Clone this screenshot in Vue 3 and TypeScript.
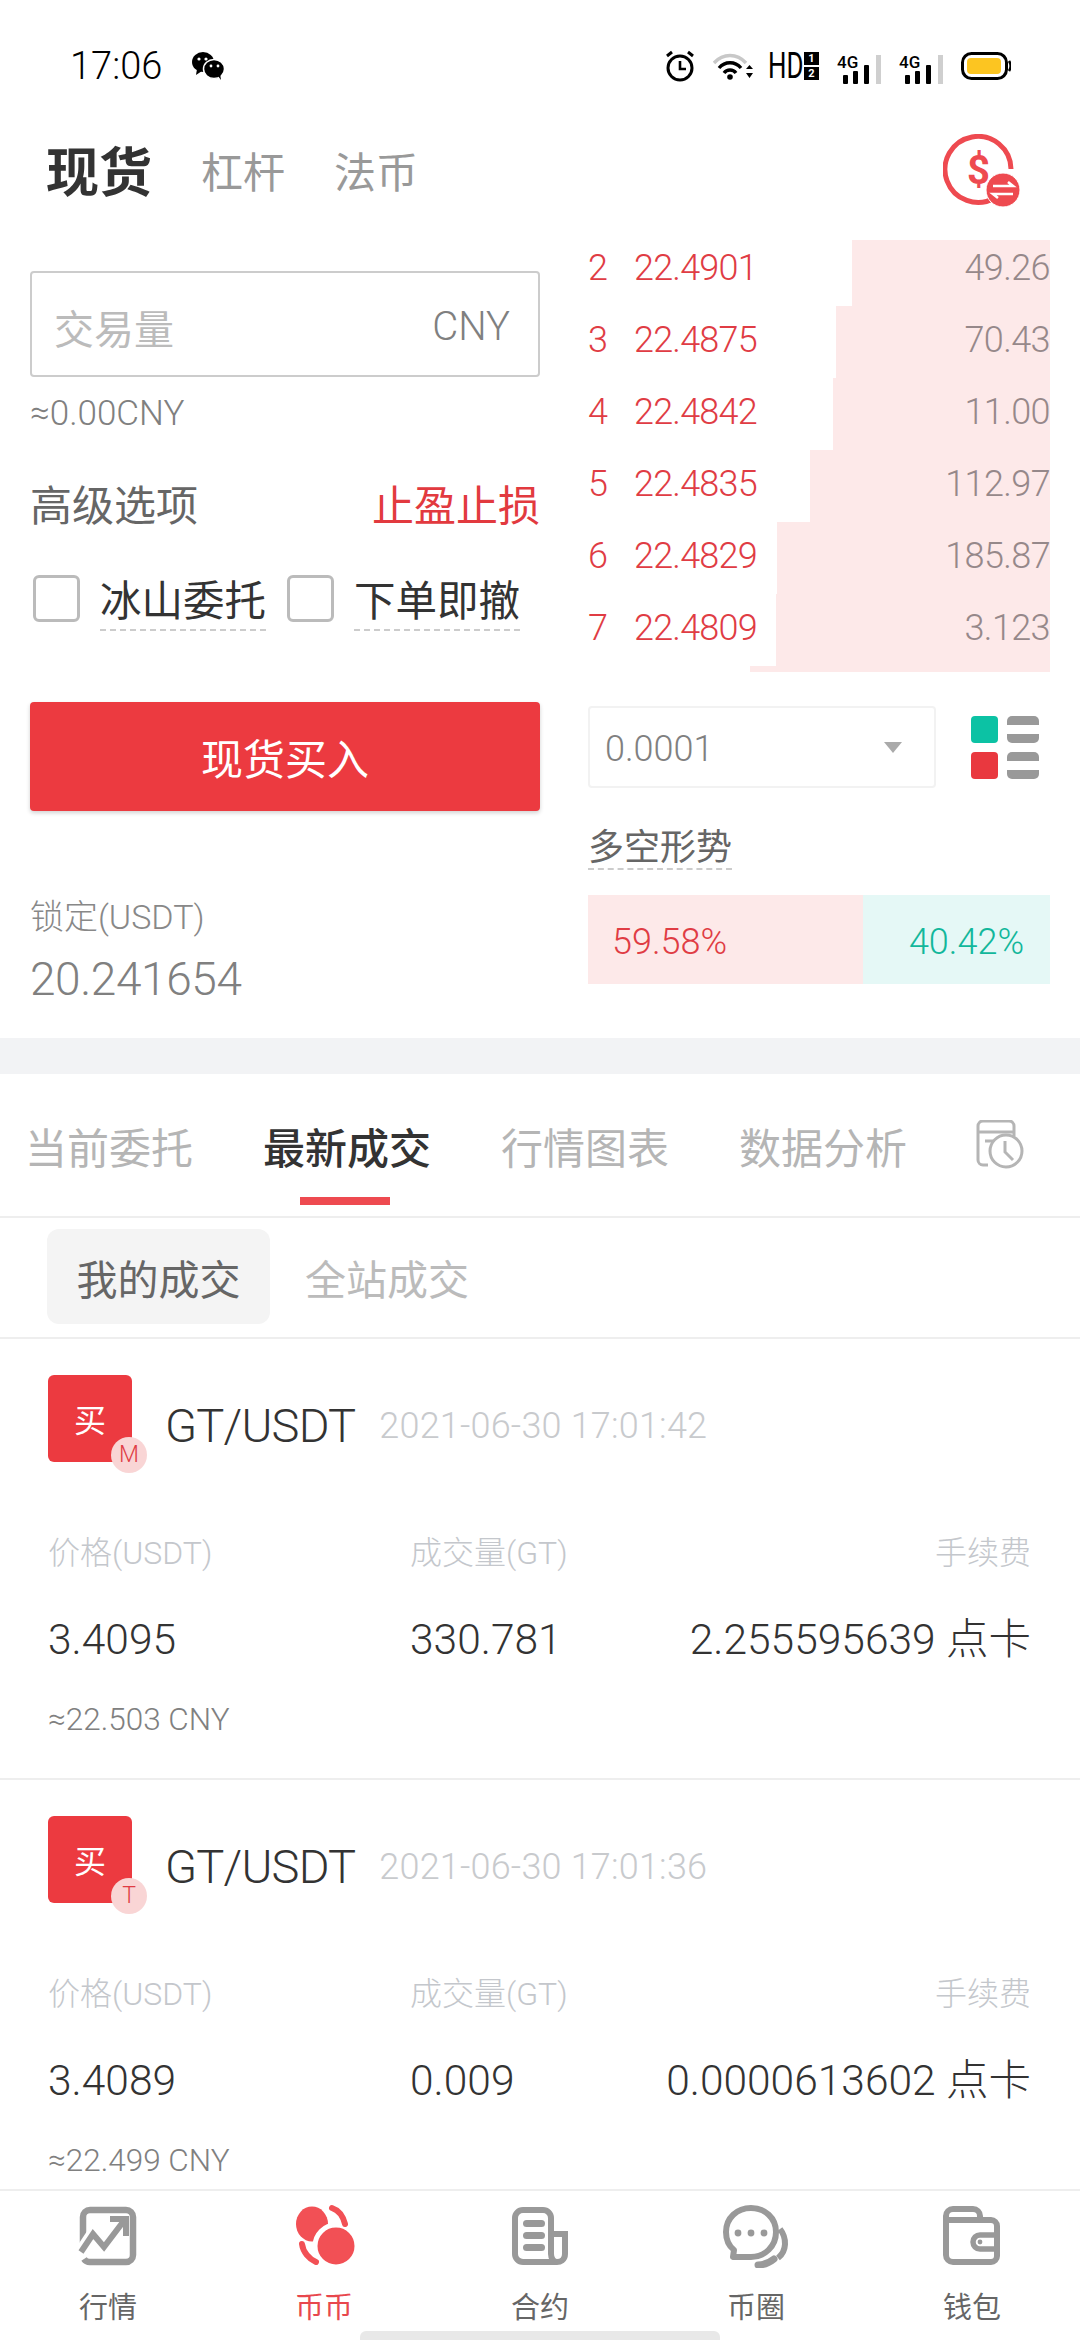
<template>
  <div class="page">
    <!-- Status bar -->
    <div class="status-bar">
      <span class="clock">17:06</span>
      <svg class="wechat" width="34" height="30" viewBox="0 0 34 30">
        <ellipse cx="12" cy="11" rx="11" ry="10" fill="#000" />
        <path d="M6 18l-1 6 6-4z" fill="#000" />
        <ellipse cx="23" cy="18" rx="10.5" ry="9.5" fill="#000" stroke="#fff" stroke-width="1.5" />
        <path d="M27 25l3 4-1-7z" fill="#000" />
        <circle cx="8" cy="8" r="1.6" fill="#fff" /><circle cx="15" cy="8" r="1.6" fill="#fff" />
        <circle cx="20" cy="15" r="1.4" fill="#fff" /><circle cx="27" cy="15" r="1.4" fill="#fff" />
      </svg>
      <div class="status-right">
        <svg width="30" height="32" viewBox="0 0 30 32">
          <circle cx="15" cy="18" r="12" fill="none" stroke="#000" stroke-width="3" />
          <path d="M15 11v8h6" fill="none" stroke="#000" stroke-width="2.6" />
          <path d="M2 6l5-4M28 6l-5-4" stroke="#000" stroke-width="3" />
        </svg>
        <svg class="wifi" width="40" height="28" viewBox="0 0 40 28">
          <path d="M1 11C10 1 24 1 33 11" fill="none" stroke="#c8c8c8" stroke-width="3.4" />
          <path d="M6 16C12 9 22 9 28 16" fill="none" stroke="#000" stroke-width="3.4" />
          <path d="M11 21c3-4 9-4 12 0" fill="none" stroke="#000" stroke-width="3.4" />
          <circle cx="17" cy="25" r="2.8" fill="#000" />
          <path d="M33 17l3.5-4 3.5 4zM33 21l3.5 5 3.5-5z" fill="#000" />
        </svg>
        <div class="hd">
          <span>HD</span>
          <i><b>1</b><b>2</b></i>
        </div>
        <svg v-for="n in 2" :key="n" class="signal" width="44" height="36" viewBox="0 -6 44 36">
          <text x="0" y="14" class="signal-text">4G</text>
          <rect x="6" y="21" width="5" height="9" rx="1" fill="#000" />
          <rect x="16" y="17" width="5" height="13" rx="1" fill="#000" />
          <rect x="27" y="11" width="5" height="19" rx="1" fill="#000" />
          <rect x="39" y="1" width="5" height="29" fill="#cfcfcf" />
        </svg>
        <svg class="battery" width="50" height="28" viewBox="0 0 50 28">
          <rect x="1.5" y="1.5" width="44" height="25" rx="9" fill="#fff" stroke="#000" stroke-width="3" />
          <rect x="6" y="6" width="34" height="16" rx="4" fill="#fcc521" />
          <path d="M48 9c2 3 2 7 0 10" fill="none" stroke="#000" stroke-width="2.5" />
        </svg>
      </div>
    </div>

    <!-- Market type header -->
    <div class="head">
      <span class="head-active">现货</span>
      <span class="head-tab">杠杆</span>
      <span class="head-tab">法币</span>
      <svg class="head-icon" width="78" height="74" viewBox="0 0 78 74">
        <path d="M51.5 64A33 33 0 1 1 68 35" fill="none" stroke="#ee4a50" stroke-width="5" />
        <text x="24" y="50" class="dollar">$</text>
        <circle cx="60" cy="56" r="17" fill="#ee4a50" stroke="#fff" stroke-width="1" />
        <path d="M50 52h20l-5-4M70 60H50l5 4" fill="none" stroke="#fff" stroke-width="2.6" />
      </svg>
    </div>

    <!-- Order form and depth -->
    <div class="trade">
      <div class="form">
        <div class="amount">
          <span class="amount-hint">交易量</span>
          <span class="amount-unit">CNY</span>
        </div>
        <div class="approx">≈0.00CNY</div>
        <div class="adv">
          <span class="adv-title">高级选项</span>
          <span class="adv-link">止盈止损</span>
        </div>
        <div class="checks">
          <span class="check-box"></span>
          <span class="check-label first">冰山委托</span>
          <span class="check-box"></span>
          <span class="check-label">下单即撤</span>
        </div>
        <div class="buy-btn">现货买入</div>
        <div class="lock-label">锁定(USDT)</div>
        <div class="lock-value">20.241654</div>
      </div>

      <div class="depth">
        <div class="depth-list">
          <div v-for="row in depthRows" :key="row.no" class="depth-row">
            <div class="depth-bar" :style="{ width: row.bar + 'px' }"></div>
            <span class="depth-no">{{ row.no }}</span>
            <span class="depth-price">{{ row.price }}</span>
            <span class="depth-qty">{{ row.qty }}</span>
          </div>
        </div>
        <div class="precision">
          <div class="precision-select">
            <span class="precision-value">0.0001</span>
            <i class="caret"></i>
          </div>
          <div class="layout-toggle">
            <i class="sq green"></i><i class="lines"></i>
            <i class="sq red"></i><i class="lines"></i>
          </div>
        </div>
        <div class="trend-title">多空形势</div>
        <div class="trend">
          <div class="trend-long">59.58%</div>
          <div class="trend-short">40.42%</div>
        </div>
      </div>
    </div>

    <div class="gap"></div>

    <!-- Scrolling lower part -->
    <div class="lower">
      <div class="tabs">
        <span v-for="t in tabs" :key="t" class="tab" :class="{ active: t === '最新成交' }">{{ t }}</span>
        <svg class="tab-icon" width="50" height="50" viewBox="0 0 50 50">
          <path d="M12 45H7a5 5 0 0 1-5-5V6a5 5 0 0 1 5-5h26a5 5 0 0 1 5 5v10" fill="none" stroke="#b5b5b5" stroke-width="3" />
          <path d="M2 12h36M9 21h14" fill="none" stroke="#b5b5b5" stroke-width="3" />
          <circle cx="30" cy="31" r="16" fill="#fff" stroke="#b5b5b5" stroke-width="3" />
          <path d="M29 21v11l8 8" fill="none" stroke="#b5b5b5" stroke-width="3" />
        </svg>
      </div>
      <div class="subtabs">
        <span class="subtab on">我的成交</span>
        <span class="subtab">全站成交</span>
      </div>

      <div v-for="trade in trades" :key="trade.time" class="card">
        <div class="card-head">
          <div class="side">
            买
            <span class="side-badge">{{ trade.role }}</span>
          </div>
          <span class="pair">GT/USDT</span>
          <span class="time">{{ trade.time }}</span>
        </div>
        <div class="cols labels">
          <span class="col-a">价格(USDT)</span>
          <span class="col-b">成交量(GT)</span>
          <span class="col-c">手续费</span>
        </div>
        <div class="cols values">
          <span class="col-a">{{ trade.price }}</span>
          <span class="col-b">{{ trade.amount }}</span>
          <span class="col-c">{{ trade.fee }} 点卡</span>
        </div>
        <div class="cny">{{ trade.cny }}</div>
      </div>
    </div>

    <!-- Bottom navigation -->
    <div class="nav">
      <div v-for="item in navItems" :key="item.key" class="nav-item" :class="{ current: item.key === 'spot' }">
        <svg class="nav-icon" width="72" height="64" viewBox="0 0 72 64">
          <template v-if="item.key === 'market'">
            <path d="M11 44V13a7 7 0 0 1 7-7h36a7 7 0 0 1 7 7v38a7 7 0 0 1-7 7H18a7 7 0 0 1-6-3" fill="none" stroke="#999" stroke-width="6.5" />
            <path d="M7 50l14-21 11 14 19-25" fill="none" stroke="#fff" stroke-width="12" />
            <path d="M9 48l12-18 11 13 19-25" fill="none" stroke="#999" stroke-width="6" />
            <path d="M38 15h16v17" fill="none" stroke="#999" stroke-width="6" />
          </template>
          <template v-else-if="item.key === 'spot'">
            <ellipse cx="24" cy="20" rx="16" ry="17.5" fill="#f25055" />
            <ellipse cx="48" cy="42" rx="21" ry="21" fill="#f25055" stroke="#fff" stroke-width="5" />
            <path d="M44 4c6 2 11 8 13 16" fill="none" stroke="#f25055" stroke-width="6" stroke-linecap="round" />
            <path d="M14 40c1 8 7 15 14 18" fill="none" stroke="#f25055" stroke-width="6" stroke-linecap="round" />
          </template>
          <template v-else-if="item.key === 'futures'">
            <path d="M53 58H19a8 8 0 0 1-8-8V14a8 8 0 0 1 8-8h20a8 8 0 0 1 8 8v36c0 5 3 8 6 8s8-2 8-8V30H48" fill="none" stroke="#999" stroke-width="6" />
            <rect x="19" y="16" width="22" height="7" rx="3.5" fill="#999" />
            <rect x="19" y="28" width="22" height="7" rx="3.5" fill="#999" />
            <rect x="19" y="40" width="22" height="7" rx="3.5" fill="#999" />
          </template>
          <template v-else-if="item.key === 'social'">
            <path d="M31 4C17 4 6 14 6 28c0 8 3 14 8 18l-1 7h18c14 0 25-11 25-25S45 4 31 4z" fill="none" stroke="#999" stroke-width="6" stroke-linejoin="round" />
            <circle cx="18" cy="29" r="3.4" fill="#999" />
            <circle cx="31" cy="29" r="3.4" fill="#999" />
            <circle cx="44" cy="29" r="3.4" fill="#999" />
            <path d="M60 25c7 9 7 22-2 29" fill="none" stroke="#999" stroke-width="6" />
            <path d="M38 61c6 0 11-2 16-6" fill="none" stroke="#999" stroke-width="7" stroke-linecap="round" />
          </template>
          <template v-else>
            <path d="M10 18v-6a7 7 0 0 1 7-7h20a7 7 0 0 1 7 7v5" fill="none" stroke="#999" stroke-width="6" />
            <path d="M10 16h45a6 6 0 0 1 6 6v30a6 6 0 0 1-6 6H17a7 7 0 0 1-7-7z" fill="none" stroke="#999" stroke-width="6" />
            <path d="M61 31H44a7 7 0 0 0 0 14h17" fill="none" stroke="#999" stroke-width="5.5" />
            <circle cx="44" cy="38" r="2.4" fill="#999" />
          </template>
        </svg>
        <span class="nav-label">{{ item.label }}</span>
      </div>
      <div class="home-bar"></div>
    </div>
  </div>
</template>

<script setup lang="ts">
interface DepthRow {
  no: number;
  price: string;
  qty: string;
  bar: number;
}

interface Trade {
  role: string;
  time: string;
  price: string;
  amount: string;
  fee: string;
  cny: string;
}

const depthRows: DepthRow[] = [
  { no: 2, price: '22.4901', qty: '49.26', bar: 198 },
  { no: 3, price: '22.4875', qty: '70.43', bar: 214 },
  { no: 4, price: '22.4842', qty: '11.00', bar: 217 },
  { no: 5, price: '22.4835', qty: '112.97', bar: 240 },
  { no: 6, price: '22.4829', qty: '185.87', bar: 273 },
  { no: 7, price: '22.4809', qty: '3.123', bar: 274 },
];

const tabs = ['当前委托', '最新成交', '行情图表', '数据分析'];

const trades: Trade[] = [
  { role: 'M', time: '2021-06-30 17:01:42', price: '3.4095', amount: '330.781', fee: '2.255595639', cny: '≈22.503 CNY' },
  { role: 'T', time: '2021-06-30 17:01:36', price: '3.4089', amount: '0.009', fee: '0.0000613602', cny: '≈22.499 CNY' },
];

const navItems = [
  { key: 'market', label: '行情' },
  { key: 'spot', label: '币币' },
  { key: 'futures', label: '合约' },
  { key: 'social', label: '币圈' },
  { key: 'wallet', label: '钱包' },
];
</script>

<style>
html,
body {
  margin: 0;
  background: #fff;
}
</style>

<style scoped>
.page {
  width: 1080px;
  height: 2340px;
  display: flex;
  flex-direction: column;
  overflow: hidden;
  background: #fff;
  font-family: Roboto, "Noto Sans CJK SC", sans-serif;
  color: #333;
}

/* Status bar */
.status-bar {
  height: 100px;
  flex: none;
  display: flex;
  align-items: center;
  padding: 32px 69px 0 70px;
  box-sizing: border-box;
}

.clock {
  font-size: 38px;
  font-weight: 300;
  color: #000;
  line-height: 36px;
}

.wechat {
  margin-left: 29px;
}

.status-right {
  margin-left: auto;
  display: flex;
  align-items: center;
  gap: 18px;
}

.hd {
  display: flex;
  align-items: center;
  margin-left: -3px;
  gap: 1px;
}

.hd span {
  font-size: 36px;
  line-height: 30px;
  color: #000;
  transform: scaleX(0.72);
  transform-origin: left center;
  margin-right: -14px;
}

.hd i {
  display: flex;
  flex-direction: column;
  gap: 2px;
  font-style: normal;
}

.hd b {
  width: 15px;
  height: 13px;
  background: #000;
  color: #fff;
  font-size: 11px;
  line-height: 13px;
  text-align: center;
}

.signal-text {
  font-size: 17px;
  font-weight: 500;
  fill: #000;
  font-family: Roboto, sans-serif;
}

/* Header */
.head {
  height: 140px;
  flex: none;
  display: flex;
  align-items: center;
  padding: 0 59px 0 46px;
  box-sizing: border-box;
}

.head-active {
  font-size: 53px;
  font-weight: 700;
  color: #333;
  margin-right: 49px;
  position: relative;
  top: -1px;
}

.head-tab {
  font-size: 42px;
  color: #999;
  margin-right: 49px;
  position: relative;
  top: -1px;
}

.head-icon {
  margin-left: auto;
  margin-top: 2px;
}

.dollar {
  font-size: 40px;
  font-weight: 700;
  fill: #ee4a50;
  font-family: Roboto, sans-serif;
}

/* Trade section */
.trade {
  height: 798px;
  flex: none;
  display: flex;
  padding-left: 30px;
}

.form {
  width: 510px;
  padding-top: 31px;
}

.amount {
  height: 106px;
  box-sizing: border-box;
  border: 2px solid #ccc;
  border-radius: 4px;
  display: flex;
  align-items: center;
  justify-content: space-between;
  padding: 5px 28px 0 22px;
}

.amount-hint {
  font-size: 40px;
  color: #bbb;
}

.amount-unit {
  font-size: 40px;
  font-weight: 300;
  color: #808080;
}

.approx {
  margin-top: 17px;
  font-size: 35px;
  line-height: 40px;
  font-weight: 300;
  color: #808080;
}

.adv {
  margin-top: 48px;
  display: flex;
  justify-content: space-between;
  font-size: 42px;
  line-height: 50px;
  color: #666;
}

.adv-link {
  color: #e23a3f;
}

.checks {
  margin-top: 37px;
  display: flex;
  align-items: flex-start;
  padding-left: 3px;
}

.check-box {
  width: 47px;
  height: 47px;
  margin-top: 6px;
  box-sizing: border-box;
  border: 3px solid #bbb;
  border-radius: 6px;
}

.check-label {
  margin-left: 20px;
  padding-top: 6px;
  font-size: 41.5px;
  line-height: 54px;
  color: #333;
  border-bottom: 2px dashed #ccc;
}

.check-label.first {
  margin-right: 21px;
}

.buy-btn {
  margin-top: 71px;
  height: 109px;
  border-radius: 4px;
  background: #ec3a40;
  box-shadow: 0 2px 4px rgba(0, 0, 0, 0.18);
  color: #fff;
  font-size: 42px;
  line-height: 118px;
  text-align: center;
}

.lock-label {
  margin-top: 86px;
  font-size: 34px;
  line-height: 40px;
  font-weight: 300;
  color: #888;
}

.lock-value {
  margin-top: 17px;
  font-size: 46px;
  line-height: 50px;
  font-weight: 300;
  color: #808080;
  letter-spacing: -0.4px;
}

.depth {
  width: 462px;
  margin-left: 48px;
}

.depth-list {
  height: 432px;
  overflow: hidden;
  position: relative;
  /* last bar peeking out under the list */
  background: linear-gradient(#fde9e9, #fde9e9) no-repeat right bottom / 300px 6px;
}

.depth-row {
  position: relative;
  height: 72px;
  top: -9px;
  display: flex;
  align-items: center;
  box-sizing: border-box;
  padding-top: 3px;
  font-size: 36px;
  font-weight: 300;
  line-height: 69px;
}

.depth-bar {
  position: absolute;
  top: 3px;
  right: 0;
  height: 72px;
  background: #fde9e9;
}

.depth-no {
  position: relative;
  width: 46px;
  color: #e03c44;
}

.depth-price {
  position: relative;
  color: #e03c44;
  letter-spacing: -0.8px;
}

.depth-qty {
  position: relative;
  margin-left: auto;
  color: #96888a;
  letter-spacing: -0.6px;
}

.precision {
  margin-top: 34px;
  display: flex;
  align-items: center;
}

.precision-select {
  width: 348px;
  height: 82px;
  box-sizing: border-box;
  border: 2px solid #f2f2f2;
  border-radius: 4px;
  display: flex;
  align-items: center;
  justify-content: space-between;
  padding: 0 32px 0 15px;
  font-size: 36px;
  font-weight: 300;
  color: #808080;
}

.precision-value {
  padding-top: 3px;
}

.caret {
  width: 0;
  height: 0;
  border-left: 9px solid transparent;
  border-right: 9px solid transparent;
  border-top: 11px solid #aaa;
}

.layout-toggle {
  margin-left: 35px;
  display: grid;
  grid-template-columns: 27px 32px;
  gap: 9px 9px;
}

.sq {
  width: 27px;
  height: 27px;
  border-radius: 4px;
}

.sq.green {
  background: #0cc2a4;
}

.sq.red {
  background: #e9383f;
}

.lines {
  height: 27px;
  background:
    linear-gradient(#999, #999) top / 100% 9px no-repeat,
    linear-gradient(#999, #999) bottom / 100% 9px no-repeat;
  border-radius: 5px;
}

.trend-title {
  margin-top: 33px;
  display: inline-block;
  padding-top: 7px;
  font-size: 36px;
  line-height: 40px;
  color: #666;
  border-bottom: 2px dashed #ccc;
}

.trend {
  margin-top: 25px;
  height: 89px;
  display: flex;
  font-size: 36px;
  font-weight: 300;
  line-height: 95px;
}

.trend-long {
  width: 275px;
  padding-left: 24px;
  box-sizing: border-box;
  background: #fde9e9;
  color: #e03c44;
}

.trend-short {
  flex: 1;
  text-align: right;
  padding-right: 26px;
  background: #e5f8f6;
  color: #12b79b;
}

.gap {
  height: 36px;
  flex: none;
  background: #f2f3f5;
}

/* Lower part */
.lower {
  flex: 1;
  min-height: 0;
  overflow: hidden;
}

.tabs {
  height: 144px;
  box-sizing: border-box;
  border-bottom: 2px solid #eee;
  display: flex;
  align-items: center;
  padding-left: 25px;
  position: relative;
}

.tab {
  position: relative;
  font-size: 42px;
  color: #b5b5b5;
  margin-right: 70px;
  white-space: nowrap;
}

.tab.active {
  color: #333;
  font-weight: 500;
}

.tab.active::after {
  content: "";
  position: absolute;
  left: 37px;
  width: 90px;
  bottom: -29px;
  height: 8px;
  background: #ee4a50;
}

.tab-icon {
  margin-left: -1px;
}

.subtabs {
  height: 121px;
  box-sizing: border-box;
  border-bottom: 2px solid #eee;
  padding: 11px 0 12px 47px;
  display: flex;
  gap: 35px;
}

.subtab {
  height: 95px;
  line-height: 105px;
  font-size: 41px;
  color: #bbb;
}

.subtab.on {
  width: 223px;
  text-align: center;
  background: #f4f4f4;
  border-radius: 12px;
  color: #666;
}

.card {
  height: 441px;
  box-sizing: border-box;
  border-bottom: 2px solid #eee;
  padding: 36px 49px 0 48px;
}

.card-head {
  display: flex;
  align-items: center;
  height: 87px;
}

.side {
  position: relative;
  width: 84px;
  height: 87px;
  border-radius: 6px;
  background: #ec3a40;
  color: #fff;
  font-size: 32px;
  line-height: 93px;
  text-align: center;
}

.side-badge {
  position: absolute;
  right: -15px;
  bottom: -11px;
  width: 36px;
  height: 36px;
  border-radius: 50%;
  background: #f9d5d5;
  color: #e03c44;
  font-size: 23px;
  font-weight: 300;
  line-height: 36px;
}

.pair {
  margin-left: 33px;
  padding-top: 14px;
  font-size: 47px;
  font-weight: 300;
  color: #333;
  letter-spacing: -0.8px;
}

.time {
  margin-left: 24px;
  padding-top: 14px;
  font-size: 36px;
  font-weight: 300;
  color: #c8cacd;
  letter-spacing: 0.2px;
}

.cols {
  display: flex;
  position: relative;
}

.col-a {
  width: 362px;
}

.col-c {
  margin-left: auto;
}

.labels {
  margin-top: 69px;
  font-size: 32px;
  line-height: 44px;
  font-weight: 300;
  color: #c4c7cc;
}

.values {
  margin-top: 35px;
  font-size: 42.5px;
  line-height: 60px;
  font-weight: 300;
  color: #333;
}

.cny {
  margin-top: 30px;
  font-size: 31.5px;
  line-height: 40px;
  font-weight: 300;
  color: #808080;
}

/* Bottom nav */
.nav {
  position: relative;
  height: 151px;
  flex: none;
  box-sizing: border-box;
  border-top: 2px solid #eee;
  display: flex;
  background: #fff;
}

.nav-item {
  width: 216px;
  display: flex;
  flex-direction: column;
  align-items: center;
  padding-top: 13px;
}

.nav-label {
  margin-top: 21px;
  font-size: 29px;
  line-height: 38px;
  color: #666;
}

.current .nav-label {
  color: #e8474d;
}

.home-bar {
  position: absolute;
  left: 360px;
  bottom: 0;
  width: 360px;
  height: 9px;
  border-radius: 6px 6px 0 0;
  background: #e8e8e8;
}
</style>
